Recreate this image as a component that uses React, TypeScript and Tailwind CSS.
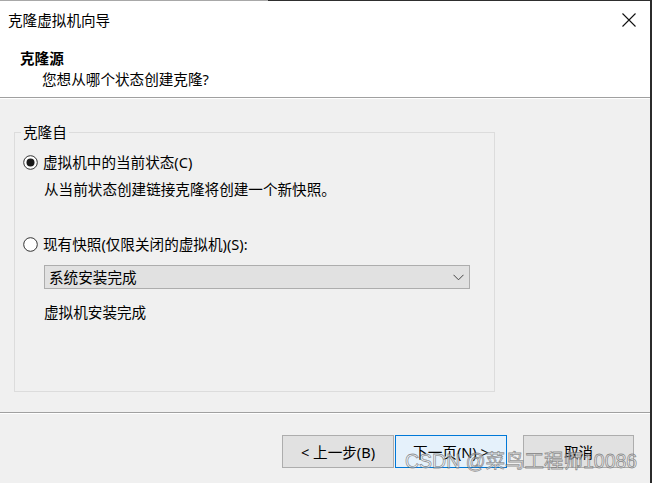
import React from "react";

function Radio({ checked }: { checked: boolean }) {
  return (
    <svg width="15" height="15" viewBox="0 0 15 15" className="shrink-0">
      <circle cx="7.5" cy="7.5" r="6.8" fill="#ffffff" stroke="#333333" strokeWidth="1" />
      {checked && <circle cx="7.5" cy="7.5" r="4" fill="#1a1a1a" />}
    </svg>
  );
}

export default function App() {
  return (
    <div className="w-[652px] h-[483px] relative overflow-hidden flex flex-col bg-[#f0f0f0] border-r-2 border-[#2b2b2b] font-['Noto_Sans','Noto_Sans_CJK_SC',sans-serif] text-[14.6px] text-[#000] leading-[20px]">
      {/* top frame line */}
      <div className="flex h-px shrink-0">
        <div className="w-[268px] bg-[#a8a8a8]" />
        <div className="flex-1 bg-[#2e2e2e]" />
      </div>

      {/* header */}
      <div className="h-[96px] bg-white shrink-0 flex flex-col">
        <div className="flex items-center justify-between pt-[9px] pl-[8px] pr-[14px]">
          <span className="leading-[20px]">克隆虚拟机向导</span>
          <svg width="14" height="14" viewBox="0 0 14 14">
            <path d="M0.5 0.5 L13.5 13.5 M13.5 0.5 L0.5 13.5" stroke="#111" strokeWidth="1.1" fill="none" />
          </svg>
        </div>
        <div className="pl-[20px] mt-[18px] font-bold leading-[20px]">克隆源</div>
        <div className="pl-[42px] mt-px leading-[20px]">您想从哪个状态创建克隆?</div>
      </div>
      <div className="h-px bg-[#a0a0a0] shrink-0" />
      <div className="h-px bg-white shrink-0" />

      {/* body */}
      <div className="pl-[14px]">
        <div className="relative mt-[33px] w-[481px] h-[260px] border border-[#dcdcdc] flex flex-col">
          <span className="absolute -top-[11px] left-[6px] px-[2px] bg-[#f0f0f0] leading-[20px]">克隆自</span>
          <div className="flex items-center mt-[19px] ml-[8px] h-[20px]">
            <Radio checked />
            <span className="ml-[5px]">虚拟机中的当前状态(C)</span>
          </div>
          <div className="mt-[7px] ml-[29px]">从当前状态创建链接克隆将创建一个新快照。</div>
          <div className="flex items-center mt-[35px] ml-[8px] h-[20px]">
            <Radio checked={false} />
            <span className="ml-[5px]">现有快照(仅限关闭的虚拟机)(S):</span>
          </div>
          <div className="mt-[11px] ml-[29px] w-[426px] h-[24px] bg-[#e1e1e1] border border-[#adadad] flex items-center justify-between pl-[4px] pr-[5px]">
            <span>系统安装完成</span>
            <svg width="11" height="7" viewBox="0 0 11 7">
              <path d="M0.5 0.8 L5.5 5.8 L10.5 0.8" stroke="#444" strokeWidth="1" fill="none" />
            </svg>
          </div>
          <div className="mt-[13px] ml-[29px]">虚拟机安装完成</div>
        </div>
      </div>

      <div className="mt-[20px] h-px bg-[#a0a0a0] shrink-0" />
      <div className="h-px bg-white shrink-0" />

      {/* buttons */}
      <div className="flex justify-end pr-[16px] mt-[21px]">
        <div className="w-[112px] h-[33px] bg-[#e1e1e1] border border-[#adadad] flex items-center justify-center">&lt; 上一步(B)</div>
        <div className="ml-[1px] w-[112px] h-[33px] bg-[#e5f1fb] border border-[#0078d7] flex items-center justify-center">下一页(N) &gt;</div>
        <div className="ml-[16px] w-[111px] h-[33px] bg-[#e1e1e1] border border-[#adadad] flex items-center justify-center">取消</div>
      </div>

      {/* watermark */}
      <div className="absolute left-[405px] top-[449px] text-[19.5px] leading-[24px] font-['Liberation_Sans','Noto_Sans_CJK_SC',sans-serif] text-[rgba(255,255,255,0.55)] [-webkit-text-stroke:0.8px_rgba(90,90,90,0.65)] whitespace-nowrap">
        CSDN @菜鸟工程师10086
      </div>
    </div>
  );
}
